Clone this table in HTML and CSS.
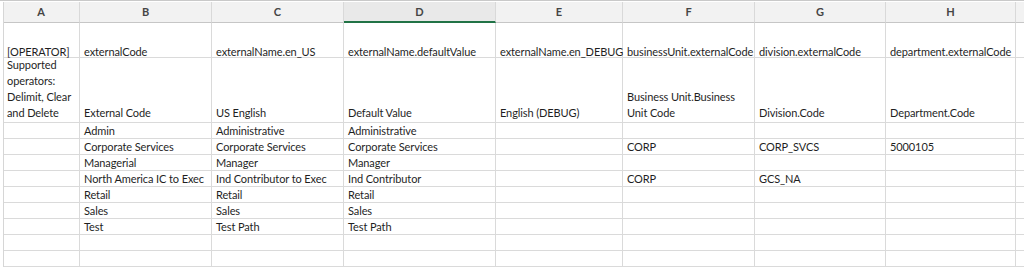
FILE: index.html
```html
<!DOCTYPE html>
<html>
<head>
<meta charset="utf-8">
<link rel="stylesheet" href="styles.css">
</head>
<body>
<div class="sheet">
  <div class="row head">
    <div class="c a">A</div><div class="c b">B</div><div class="c cc">C</div><div class="c d sel">D</div><div class="c e">E</div><div class="c f">F</div><div class="c g">G</div><div class="c h">H</div><div class="c i"></div>
  </div>
  <div class="row r1">
    <div class="c a">[OPERATOR]</div><div class="c b">externalCode</div><div class="c cc">externalName.en_US</div><div class="c d">externalName.defaultValue</div><div class="c e">externalName.en_DEBUG</div><div class="c f">businessUnit.externalCode</div><div class="c g">division.externalCode</div><div class="c h">department.externalCode</div><div class="c i"></div>
  </div>
  <div class="row r2">
    <div class="c a"><span>Supported<br>operators:<br>Delimit, Clear<br>and Delete</span></div><div class="c b">External Code</div><div class="c cc">US English</div><div class="c d">Default Value</div><div class="c e">English (DEBUG)</div><div class="c f"><span>Business Unit.Business<br>Unit Code</span></div><div class="c g">Division.Code</div><div class="c h">Department.Code</div><div class="c i"></div>
  </div>
  <div class="row">
    <div class="c a"></div><div class="c b">Admin</div><div class="c cc">Administrative</div><div class="c d">Administrative</div><div class="c e"></div><div class="c f"></div><div class="c g"></div><div class="c h"></div><div class="c i"></div>
  </div>
  <div class="row">
    <div class="c a"></div><div class="c b">Corporate Services</div><div class="c cc">Corporate Services</div><div class="c d">Corporate Services</div><div class="c e"></div><div class="c f">CORP</div><div class="c g">CORP_SVCS</div><div class="c h">5000105</div><div class="c i"></div>
  </div>
  <div class="row">
    <div class="c a"></div><div class="c b">Managerial</div><div class="c cc">Manager</div><div class="c d">Manager</div><div class="c e"></div><div class="c f"></div><div class="c g"></div><div class="c h"></div><div class="c i"></div>
  </div>
  <div class="row">
    <div class="c a"></div><div class="c b">North America IC to Exec</div><div class="c cc">Ind Contributor to Exec</div><div class="c d">Ind Contributor</div><div class="c e"></div><div class="c f">CORP</div><div class="c g">GCS_NA</div><div class="c h"></div><div class="c i"></div>
  </div>
  <div class="row">
    <div class="c a"></div><div class="c b">Retail</div><div class="c cc">Retail</div><div class="c d">Retail</div><div class="c e"></div><div class="c f"></div><div class="c g"></div><div class="c h"></div><div class="c i"></div>
  </div>
  <div class="row">
    <div class="c a"></div><div class="c b">Sales</div><div class="c cc">Sales</div><div class="c d">Sales</div><div class="c e"></div><div class="c f"></div><div class="c g"></div><div class="c h"></div><div class="c i"></div>
  </div>
  <div class="row">
    <div class="c a"></div><div class="c b">Test</div><div class="c cc">Test Path</div><div class="c d">Test Path</div><div class="c e"></div><div class="c f"></div><div class="c g"></div><div class="c h"></div><div class="c i"></div>
  </div>
  <div class="row">
    <div class="c a"></div><div class="c b"></div><div class="c cc"></div><div class="c d"></div><div class="c e"></div><div class="c f"></div><div class="c g"></div><div class="c h"></div><div class="c i"></div>
  </div>
  <div class="row">
    <div class="c a"></div><div class="c b"></div><div class="c cc"></div><div class="c d"></div><div class="c e"></div><div class="c f"></div><div class="c g"></div><div class="c h"></div><div class="c i"></div>
  </div>
</div>
</body>
</html>
```

FILE: styles.css
```css
html, body {
  margin: 0;
  padding: 0;
  background: #ffffff;
  overflow: hidden;
}
body {
  font-family: Lato, "Open Sans", sans-serif;
  font-size: 11px;
  letter-spacing: -0.1px;
  color: #1f1f1f;
}
.sheet {
  padding-top: 1px;
  border-top: 1px solid #c9c9c9;
  margin-top: 0;
}
.row {
  display: flex;
  height: 16px;
  margin-left: 3px;
  border-left: 1px solid #d6d6d6;
}
.c {
  box-sizing: border-box;
  flex: none;
  height: 100%;
  border-right: 1px solid #dadada;
  border-bottom: 1px solid #dadada;
  padding: 0 4px 0 4px;
  display: flex;
  align-items: flex-end;
  white-space: nowrap;
  line-height: 15px;
  overflow: visible;
}
.a { width: 76px; padding-left: 3px; }
.b { width: 132px; }
.cc { width: 132px; }
.d { width: 152px; }
.e { width: 127px; }
.f { width: 132px; }
.g { width: 131px; }
.h { width: 130px; }
.i { width: 40px; }

.head { height: 21px; }
.head .c {
  background: #f2f2f2;
  border-bottom: 1px solid #c6c6c6;
  border-right: 1px solid #d9d9d9;
  justify-content: center;
  align-items: center;
  font-weight: 700;
  color: #454545;
  font-size: 11px;
  letter-spacing: 0;
  line-height: 20px;
}
.head .c.sel {
  background: #e9e9e9;
  border-bottom: 2px solid #217346;
}
.r1 { height: 35px; }
.r1 .c { line-height: 11px; padding-bottom: 0; }
.r2 { height: 65px; }
.r2 .c { line-height: 16px; padding-bottom: 1px; }
```
